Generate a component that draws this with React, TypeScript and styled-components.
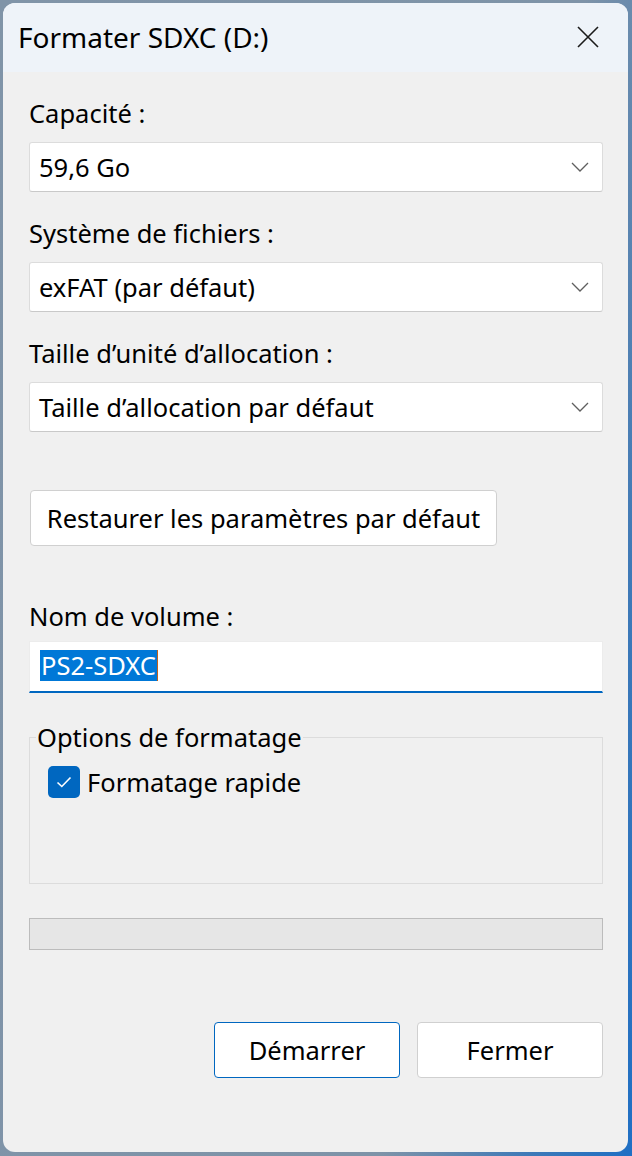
import React from 'react'
import styled, { createGlobalStyle } from 'styled-components'

const GlobalStyle = createGlobalStyle`
  html, body {
    margin: 0;
    padding: 0;
  }
  body {
    font-family: 'Noto Sans', 'Open Sans', sans-serif;
    color: #000;
  }
`

const ChevronDown = () => (
  <svg width='18' height='10' viewBox='0 0 18 10'>
    <path d='M1 1 L9 9 L17 1' fill='none' stroke='#5f5f5f' strokeWidth='1.3' />
  </svg>
)

const CloseIcon = () => (
  <svg width='22' height='22' viewBox='0 0 22 22'>
    <path d='M1 1 L21 21 M21 1 L1 21' fill='none' stroke='#1b1b1b' strokeWidth='1.6' />
  </svg>
)

const CheckIcon = () => (
  <svg width='16' height='12' viewBox='0 0 16 12'>
    <path d='M1.5 6.5 L5.8 10.5 L14.5 1.5' fill='none' stroke='#fff' strokeWidth='1.6' />
  </svg>
)

const Dropdown = ({ value }: { value: string }) => (
  <SelectBox>
    <span>{value}</span>
    <ChevronDown />
  </SelectBox>
)

const App = () => {
  return (
    <Page>
      <GlobalStyle />
      <Window>
        <TitleBar>
          <Title>Formater SDXC (D:)</Title>
          <CloseButton>
            <CloseIcon />
          </CloseButton>
        </TitleBar>

        <Content>
          <Field>
            <Label>Capacité :</Label>
            <Dropdown value='59,6 Go' />
          </Field>

          <Field>
            <Label>Système de fichiers :</Label>
            <Dropdown value='exFAT (par défaut)' />
          </Field>

          <Field>
            <Label>Taille d’unité d’allocation :</Label>
            <Dropdown value='Taille d’allocation par défaut' />
          </Field>

          <RestoreButton>Restaurer les paramètres par défaut</RestoreButton>

          <VolumeField>
            <Label>Nom de volume :</Label>
            <TextInput>
              <Selected>PS2-SDXC</Selected>
            </TextInput>
          </VolumeField>

          <GroupBox>
            <Legend>Options de formatage</Legend>
            <CheckRow>
              <CheckBox>
                <CheckIcon />
              </CheckBox>
              <span>Formatage rapide</span>
            </CheckRow>
          </GroupBox>

          <ProgressBar />

          <Footer>
            <DialogButton $primary>Démarrer</DialogButton>
            <DialogButton>Fermer</DialogButton>
          </Footer>
        </Content>
      </Window>
    </Page>
  )
}

const Page = styled.div`
  box-sizing: border-box;
  width: 632px;
  height: 1156px;
  padding: 3px 4px 4px 3px;
  background: linear-gradient(100deg, #8094a8 0%, #7e93a8 70%, #3d79b8 88%, #1f6fc4 100%);
`

const Window = styled.div`
  width: 625px;
  height: 1149px;
  border-radius: 12px;
  overflow: hidden;
  background: #f0f0f0;
  display: flex;
  flex-direction: column;
`

const TitleBar = styled.div`
  height: 69px;
  flex-shrink: 0;
  background: #eef3f9;
  display: flex;
  align-items: center;
  justify-content: space-between;
  padding: 0 29px 0 15px;
`

const Title = styled.div`
  font-size: 28px;
  margin-top: -1px;
`

const CloseButton = styled.div`
  display: flex;
  margin-top: -2px;
`

const Content = styled.div`
  padding: 22px 25px 0 26px;
  display: flex;
  flex-direction: column;
  font-size: 25.5px;
`

const Field = styled.div`
  display: flex;
  flex-direction: column;
  margin-bottom: 22px;
`

const Label = styled.div`
  line-height: 32px;
  padding-top: 3px;
  margin-bottom: 13px;
`

const SelectBox = styled.div`
  box-sizing: border-box;
  height: 50px;
  background: #fff;
  border: 1px solid #dcdcdc;
  border-bottom-color: #c9c9c9;
  border-radius: 3px;
  display: flex;
  align-items: center;
  justify-content: space-between;
  padding: 0 13px 0 9px;
`

const RestoreButton = styled.div`
  box-sizing: border-box;
  width: 467px;
  height: 56px;
  margin: 36px 0 0 1px;
  background: #fff;
  border: 1px solid #d0d0d0;
  border-radius: 4px;
  display: flex;
  align-items: center;
  justify-content: center;
`

const VolumeField = styled.div`
  display: flex;
  flex-direction: column;
  margin-top: 51px;

  ${Label} {
    margin-bottom: 9px;
  }
`

const TextInput = styled.div`
  box-sizing: border-box;
  height: 52px;
  background: #fff;
  border: 1px solid #ececec;
  border-bottom: 2px solid #0067c0;
  display: flex;
  align-items: center;
  padding: 0 0 3px 10px;
`

const Selected = styled.span`
  display: inline-block;
  line-height: 31px;
  padding: 0 1px;
  background: #0078d7;
  color: #fff;
  border-right: 1px solid #c0601a;
`

const GroupBox = styled.fieldset`
  box-sizing: border-box;
  height: 163px;
  margin: 28px 0 0;
  padding: 0 0 0 18px;
  border: 1px solid #dcdcdc;
  border-radius: 0;
`

const Legend = styled.legend`
  margin-left: -12px;
  padding: 0 1px;
  line-height: 32px;
`

const CheckRow = styled.div`
  display: flex;
  align-items: center;
  gap: 7px;
  margin-top: 12px;
`

const CheckBox = styled.div`
  width: 32px;
  height: 32px;
  border-radius: 5px;
  background: #0067c0;
  display: flex;
  align-items: center;
  justify-content: center;
`

const ProgressBar = styled.div`
  box-sizing: border-box;
  height: 32px;
  margin-top: 34px;
  background: #e6e6e6;
  border: 1px solid #bcbcbc;
`

const Footer = styled.div`
  display: flex;
  justify-content: flex-end;
  gap: 17px;
  margin-top: 72px;
`

const DialogButton = styled.div<{ $primary?: boolean }>`
  box-sizing: border-box;
  width: 186px;
  height: 56px;
  background: #fff;
  border: 1px solid ${props => (props.$primary ? '#0067c0' : '#d0d0d0')};
  border-radius: 4px;
  display: flex;
  align-items: center;
  justify-content: center;
`

export default App
